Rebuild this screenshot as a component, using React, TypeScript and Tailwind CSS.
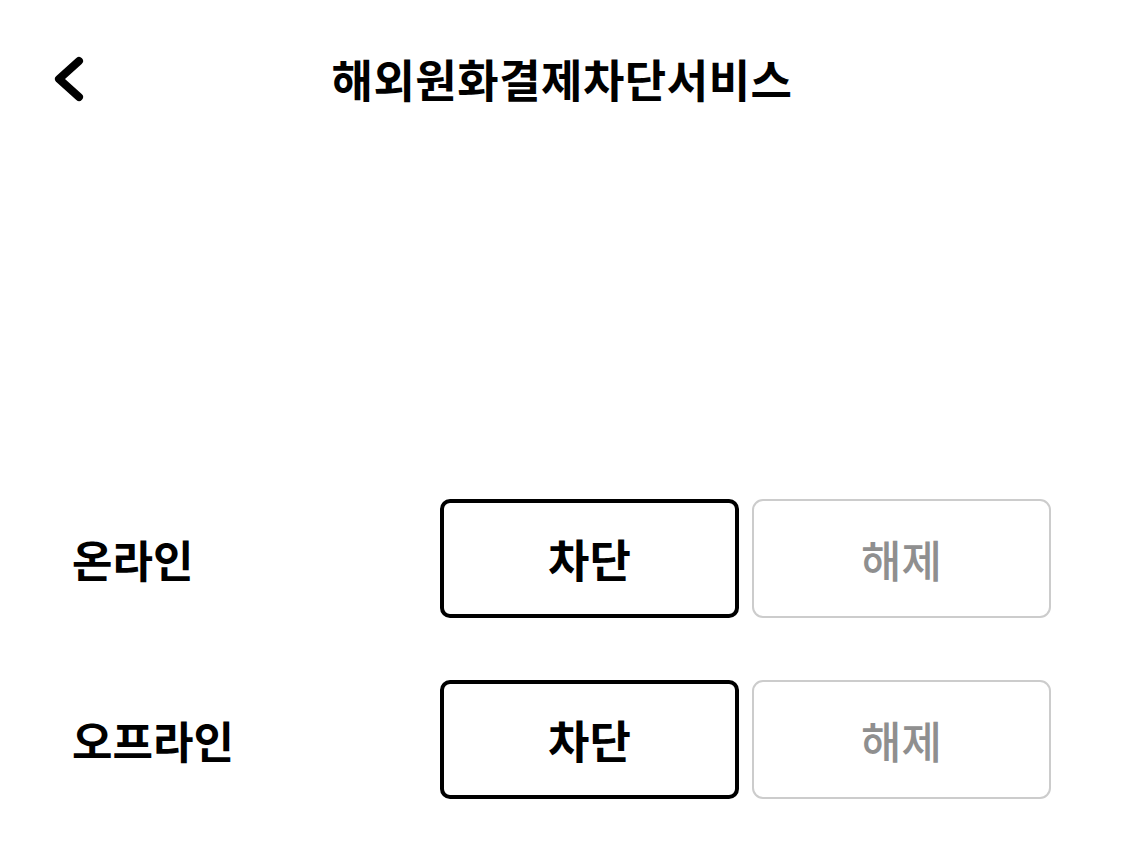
export default function App() {
  const rows = ["온라인", "오프라인"];

  return (
    <div
      className="w-[1124px] h-[863px] bg-white text-black"
      style={{ fontFamily: '"Noto Sans CJK KR", "Noto Sans", sans-serif' }}
    >
      {/* Header */}
      <div className="grid grid-cols-[1fr_auto_1fr] items-center h-[156px]">
        <button className="justify-self-start ml-[51px] mt-[2px] w-[40px] h-[50px] flex items-center justify-center">
          <svg width="40" height="50" viewBox="0 0 40 50" fill="none">
            <polyline
              points="28,7 8,25 28,43"
              stroke="#000"
              strokeWidth="8"
              strokeLinecap="round"
              strokeLinejoin="round"
            />
          </svg>
        </button>
        <h1 className="text-[45px] font-bold leading-none tracking-[0.5px]">
          해외원화결제차단서비스
        </h1>
        <div />
      </div>

      {/* Options */}
      <div className="pt-[343px] flex flex-col gap-[62px]">
        {rows.map((label) => (
          <div key={label} className="flex items-center pl-[72px] pr-[73px]">
            <span className="flex-1 text-[44px] font-bold leading-none">{label}</span>
            <div className="flex gap-[13px]">
              <button className="w-[299px] h-[119px] rounded-[10px] border-[4px] border-black flex items-center justify-center text-[45px] font-bold leading-none">
                차단
              </button>
              <button className="w-[299px] h-[119px] rounded-[11px] border-2 border-[#cccccc] flex items-center justify-center text-[44px] font-medium leading-none text-[#8f8f8f]">
                해제
              </button>
            </div>
          </div>
        ))}
      </div>
    </div>
  );
}
